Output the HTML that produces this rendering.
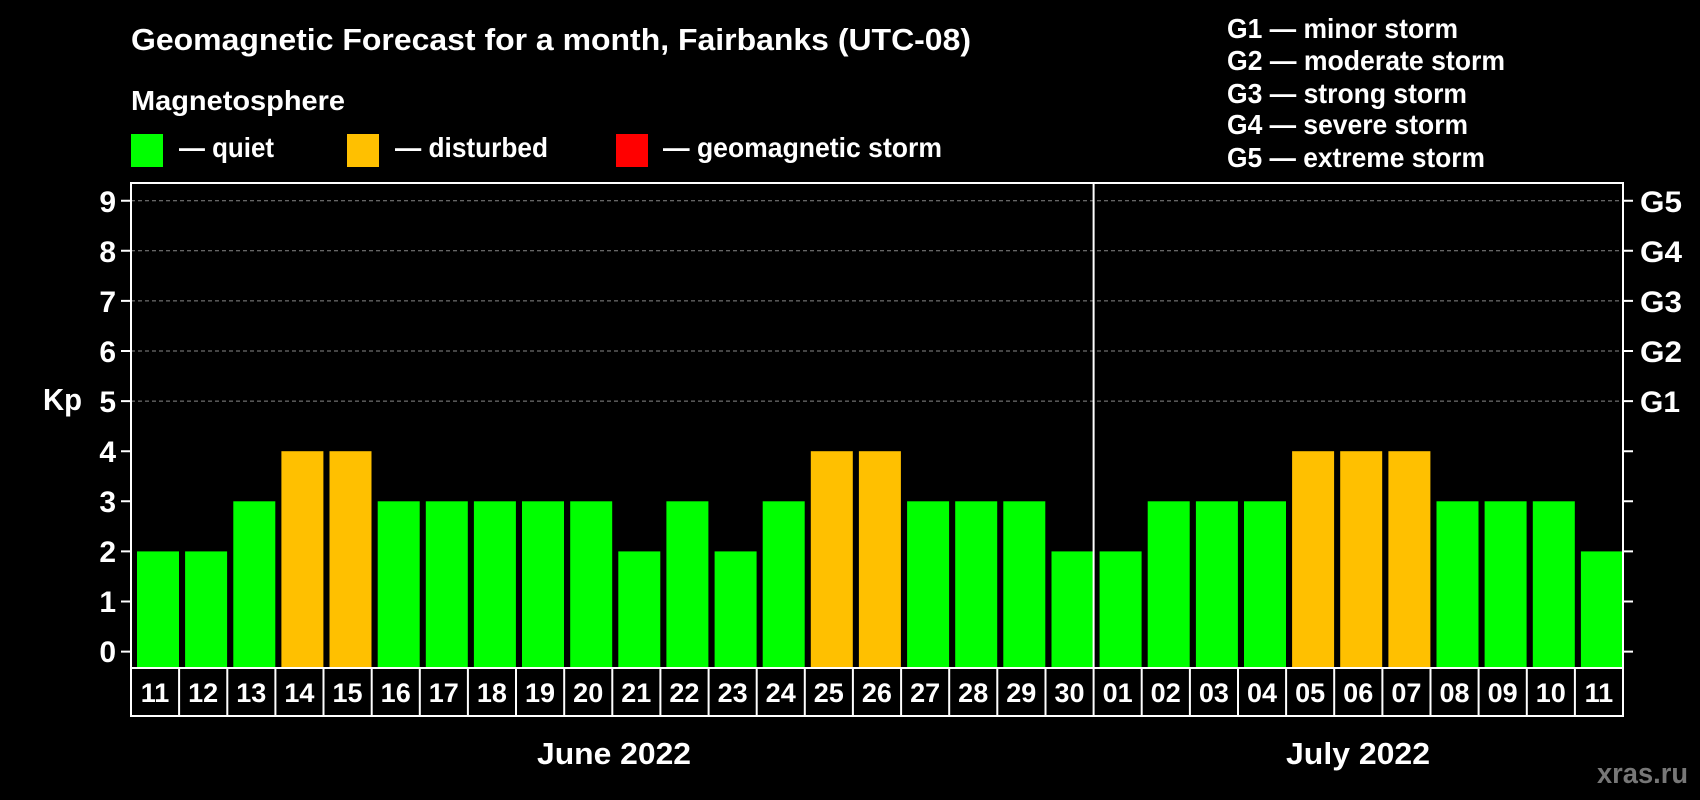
<!DOCTYPE html>
<html><head><meta charset="utf-8"><style>
html,body{margin:0;padding:0;background:#000;width:1700px;height:800px;overflow:hidden}
svg{display:block}
text{font-family:"Liberation Sans",Arial,sans-serif;font-weight:bold;fill:#fff}
</style></head><body>
<svg width="1700" height="800" viewBox="0 0 1700 800" xmlns="http://www.w3.org/2000/svg">
<rect width="1700" height="800" fill="#000"/>
<text x="131" y="50" font-size="31" textLength="840" lengthAdjust="spacingAndGlyphs">Geomagnetic Forecast for a month, Fairbanks (UTC-08)</text>
<text x="131" y="110" font-size="28" textLength="214" lengthAdjust="spacingAndGlyphs">Magnetosphere</text>
<rect x="131" y="134" width="32" height="33" fill="#00ff00"/>
<text x="179" y="157" font-size="28" textLength="95" lengthAdjust="spacingAndGlyphs">— quiet</text>
<rect x="347" y="134" width="32" height="33" fill="#ffc000"/>
<text x="395" y="157" font-size="28" textLength="153" lengthAdjust="spacingAndGlyphs">— disturbed</text>
<rect x="616" y="134" width="32" height="33" fill="#ff0000"/>
<text x="663" y="157" font-size="28" textLength="279" lengthAdjust="spacingAndGlyphs">— geomagnetic storm</text>
<g font-size="28">
<text x="1227" y="38" textLength="231" lengthAdjust="spacingAndGlyphs">G1 — minor storm</text>
<text x="1227" y="70" textLength="278" lengthAdjust="spacingAndGlyphs">G2 — moderate storm</text>
<text x="1227" y="103" textLength="240" lengthAdjust="spacingAndGlyphs">G3 — strong storm</text>
<text x="1227" y="134" textLength="241" lengthAdjust="spacingAndGlyphs">G4 — severe storm</text>
<text x="1227" y="167" textLength="258" lengthAdjust="spacingAndGlyphs">G5 — extreme storm</text>
</g>
<g stroke="#888" stroke-width="1" stroke-dasharray="4,3">
<line x1="131" y1="200.7" x2="1623" y2="200.7"/><line x1="131" y1="250.8" x2="1623" y2="250.8"/>
<line x1="131" y1="300.9" x2="1623" y2="300.9"/><line x1="131" y1="351" x2="1623" y2="351"/>
<line x1="131" y1="401.1" x2="1623" y2="401.1"/>
</g>
<g>
<rect x="137" y="551.4" width="42" height="116.6" fill="#00ff00"/>
<rect x="185.1" y="551.4" width="42" height="116.6" fill="#00ff00"/>
<rect x="233.3" y="501.3" width="42" height="166.7" fill="#00ff00"/>
<rect x="281.4" y="451.2" width="42" height="216.8" fill="#ffc000"/>
<rect x="329.5" y="451.2" width="42" height="216.8" fill="#ffc000"/>
<rect x="377.7" y="501.3" width="42" height="166.7" fill="#00ff00"/>
<rect x="425.8" y="501.3" width="42" height="166.7" fill="#00ff00"/>
<rect x="473.9" y="501.3" width="42" height="166.7" fill="#00ff00"/>
<rect x="522" y="501.3" width="42" height="166.7" fill="#00ff00"/>
<rect x="570.2" y="501.3" width="42" height="166.7" fill="#00ff00"/>
<rect x="618.3" y="551.4" width="42" height="116.6" fill="#00ff00"/>
<rect x="666.4" y="501.3" width="42" height="166.7" fill="#00ff00"/>
<rect x="714.6" y="551.4" width="42" height="116.6" fill="#00ff00"/>
<rect x="762.7" y="501.3" width="42" height="166.7" fill="#00ff00"/>
<rect x="810.8" y="451.2" width="42" height="216.8" fill="#ffc000"/>
<rect x="858.9" y="451.2" width="42" height="216.8" fill="#ffc000"/>
<rect x="907.1" y="501.3" width="42" height="166.7" fill="#00ff00"/>
<rect x="955.2" y="501.3" width="42" height="166.7" fill="#00ff00"/>
<rect x="1003.3" y="501.3" width="42" height="166.7" fill="#00ff00"/>
<rect x="1051.5" y="551.4" width="42" height="116.6" fill="#00ff00"/>
<rect x="1099.6" y="551.4" width="42" height="116.6" fill="#00ff00"/>
<rect x="1147.7" y="501.3" width="42" height="166.7" fill="#00ff00"/>
<rect x="1195.9" y="501.3" width="42" height="166.7" fill="#00ff00"/>
<rect x="1244" y="501.3" width="42" height="166.7" fill="#00ff00"/>
<rect x="1292.1" y="451.2" width="42" height="216.8" fill="#ffc000"/>
<rect x="1340.2" y="451.2" width="42" height="216.8" fill="#ffc000"/>
<rect x="1388.4" y="451.2" width="42" height="216.8" fill="#ffc000"/>
<rect x="1436.5" y="501.3" width="42" height="166.7" fill="#00ff00"/>
<rect x="1484.6" y="501.3" width="42" height="166.7" fill="#00ff00"/>
<rect x="1532.8" y="501.3" width="42" height="166.7" fill="#00ff00"/>
<rect x="1580.9" y="551.4" width="42" height="116.6" fill="#00ff00"/>
</g>
<g stroke="#fff" stroke-width="2" fill="none">
<polyline points="131,668 131,183 1623,183 1623,668"/>
<line x1="1093.6" y1="183" x2="1093.6" y2="716"/>
<rect x="131" y="668" width="1492" height="48"/>
<path d="M179.1 668V716M227.3 668V716M275.4 668V716M323.5 668V716M371.7 668V716M419.8 668V716M467.9 668V716M516 668V716M564.2 668V716M612.3 668V716M660.4 668V716M708.6 668V716M756.7 668V716M804.8 668V716M852.9 668V716M901.1 668V716M949.2 668V716M997.3 668V716M1045.5 668V716M1141.7 668V716M1189.9 668V716M1238 668V716M1286.1 668V716M1334.2 668V716M1382.4 668V716M1430.5 668V716M1478.6 668V716M1526.8 668V716M1574.9 668V716"/>
<path d="M121 651.6H131M121 601.5H131M121 551.4H131M121 501.3H131M121 451.2H131M121 401.1H131M121 351H131M121 300.9H131M121 250.8H131M121 200.7H131"/>
<path d="M1623 651.6H1633M1623 601.5H1633M1623 551.4H1633M1623 501.3H1633M1623 451.2H1633M1623 401.1H1633M1623 351H1633M1623 300.9H1633M1623 250.8H1633M1623 200.7H1633"/>
</g>
<g font-size="30" text-anchor="end">
<text x="116" y="662">0</text><text x="116" y="612">1</text><text x="116" y="562">2</text>
<text x="116" y="512">3</text><text x="116" y="462">4</text><text x="116" y="412">5</text>
<text x="116" y="362">6</text><text x="116" y="312">7</text><text x="116" y="262">8</text>
<text x="116" y="212">9</text>
</g>
<text x="43" y="410" font-size="31" textLength="39" lengthAdjust="spacingAndGlyphs">Kp</text>
<g font-size="30">
<text x="1640" y="212" textLength="42" lengthAdjust="spacingAndGlyphs">G5</text><text x="1640" y="262" textLength="42" lengthAdjust="spacingAndGlyphs">G4</text><text x="1640" y="312" textLength="42" lengthAdjust="spacingAndGlyphs">G3</text>
<text x="1640" y="362" textLength="42" lengthAdjust="spacingAndGlyphs">G2</text><text x="1640" y="412" textLength="40" lengthAdjust="spacingAndGlyphs">G1</text>
</g>
<g font-size="27" text-anchor="middle">
<text x="155" y="702">11</text><text x="203.1" y="702">12</text><text x="251.3" y="702">13</text>
<text x="299.4" y="702">14</text><text x="347.5" y="702">15</text><text x="395.7" y="702">16</text>
<text x="443.8" y="702">17</text><text x="491.9" y="702">18</text><text x="540" y="702">19</text>
<text x="588.2" y="702">20</text><text x="636.3" y="702">21</text><text x="684.4" y="702">22</text>
<text x="732.6" y="702">23</text><text x="780.7" y="702">24</text><text x="828.8" y="702">25</text>
<text x="876.9" y="702">26</text><text x="925.1" y="702">27</text><text x="973.2" y="702">28</text>
<text x="1021.3" y="702">29</text><text x="1069.5" y="702">30</text><text x="1117.6" y="702">01</text>
<text x="1165.7" y="702">02</text><text x="1213.9" y="702">03</text><text x="1262" y="702">04</text>
<text x="1310.1" y="702">05</text><text x="1358.2" y="702">06</text><text x="1406.4" y="702">07</text>
<text x="1454.5" y="702">08</text><text x="1502.6" y="702">09</text><text x="1550.8" y="702">10</text>
<text x="1598.9" y="702">11</text>
</g>
<text x="537" y="764" font-size="31" textLength="154" lengthAdjust="spacingAndGlyphs">June 2022</text>
<text x="1286" y="764" font-size="31" textLength="144" lengthAdjust="spacingAndGlyphs">July 2022</text>
<text x="1597" y="783" font-size="29" style="fill:#777" textLength="91" lengthAdjust="spacingAndGlyphs">xras.ru</text>
</svg>
</body></html>
